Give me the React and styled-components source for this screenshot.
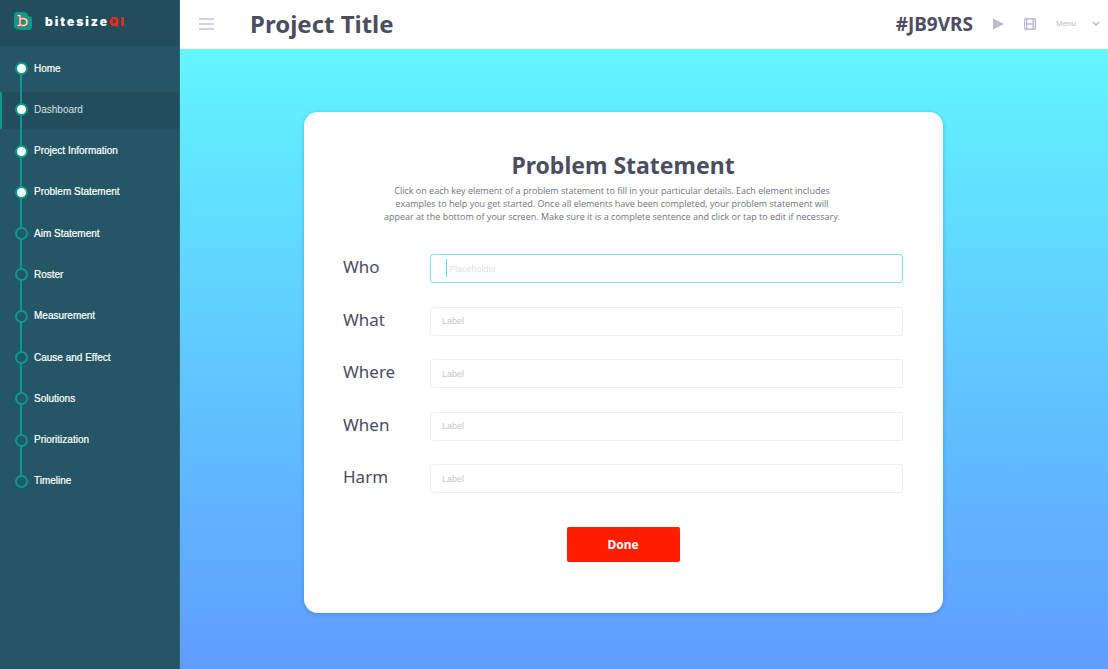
import React from "react";
import styled, { createGlobalStyle } from "styled-components";

const sans = '"Noto Sans", "Open Sans", sans-serif';
const ui = '"Liberation Sans", Arial, sans-serif';
const teal = "#0a9a8c";
const ink = "#4c4d5f";

const GlobalStyle = createGlobalStyle`
  *, *::before, *::after { box-sizing: border-box; }
  body { margin: 0; font-family: ${ui}; color: ${ink}; }
  h1, h2, p, ul { margin: 0; padding: 0; }
  button, input, select { font: inherit; margin: 0; }
`;

const Layout = styled.div`
  display: flex;
  min-height: 100vh;
`;

const Sidebar = styled.aside`
  flex: 0 0 180px;
  background: #245665;
  border-right: 1px solid #2b6172;
`;

const Brand = styled.a`
  display: flex;
  align-items: center;
  gap: 12px;
  height: 46px;
  padding: 0 0 4px 14px;
  background: #214d5c;
  text-decoration: none;
`;

const BrandName = styled.span`
  padding-top: 2px;
  font: 900 12px/20px Inter, sans-serif;
  letter-spacing: 2px;
  color: #fff;
`;

const BrandAccent = styled.span`
  color: #ff2418;
`;

const Steps = styled.ul`
  position: relative;
  display: flex;
  flex-direction: column;
  justify-content: space-between;
  height: 450px;
  margin-top: 5px;
  list-style: none;

  &::before {
    content: "";
    position: absolute;
    z-index: 1;
    top: 18px;
    bottom: 18px;
    left: 20px;
    width: 2px;
    background: ${teal};
  }
`;

const StepLink = styled.a`
  display: flex;
  align-items: center;
  gap: 6px;
  height: 37px;
  padding: 0 0 2px 13px;
  border-left: 2px solid ${(p) => (p.$active ? teal : "transparent")};
  background: ${(p) => (p.$active ? "#214d5c" : "transparent")};
  color: ${(p) => (p.$active ? "#d9e2e5" : "#fff")};
  font-size: 10px;
  line-height: 16px;
  -webkit-text-stroke: ${(p) => (p.$active ? "0" : "thin")};
  text-decoration: none;
`;

const Dot = styled.span`
  position: relative;
  z-index: 2;
  width: 13px;
  height: 13px;
  border: 2px solid ${teal};
  border-radius: 50%;
  background: ${(p) => (p.$done ? "#fff" : "#245665")};
`;

const Page = styled.div`
  flex: 1;
  min-width: 0;
  display: flex;
  flex-direction: column;
`;

const TopBar = styled.header`
  display: flex;
  align-items: center;
  height: 49px;
  padding: 0 8px 2px 19px;
  background: #fff;
  color: #bdbacd;
`;

const ProjectTitle = styled.h1`
  flex: 1;
  margin-left: 36px;
  font: 700 24px/32px ${sans};
  color: ${ink};
`;

const ProjectCode = styled.span`
  margin-right: 20px;
  font: 700 19px/28px ${sans};
  color: ${ink};
`;

const IconButton = styled.button`
  display: flex;
  padding: 0;
  margin-right: ${(p) => p.$gap || 0}px;
  border: 0;
  background: none;
  color: inherit;
  cursor: pointer;
`;

const MenuButton = styled.button`
  display: flex;
  align-items: center;
  gap: 16px;
  padding: 0;
  border: 0;
  background: none;
  color: inherit;
  font-size: 8px;
  line-height: 12px;
  cursor: pointer;
`;

const Main = styled.main`
  flex: 1;
  padding: 63px 165px 56px 124px;
  background: linear-gradient(#62f6ff, #60c8ff 50%, #609dff);
`;

const Card = styled.form`
  display: flex;
  flex-direction: column;
  align-items: center;
  padding: 36px 40px 51px 39px;
  border-radius: 14px;
  background: #fff;
  box-shadow: 0 1px 4px rgba(40, 90, 150, 0.35);
`;

const CardTitle = styled.h2`
  font: 700 23px/34px ${sans};
  color: ${ink};
`;

const Intro = styled.p`
  margin: 2px 22px 0 0;
  font: 400 9px/13px "Open Sans", sans-serif;
  text-align: center;
  color: #73737d;
`;

const Fields = styled.div`
  display: flex;
  flex-direction: column;
  justify-content: space-between;
  align-self: stretch;
  height: 239px;
  margin-top: 31px;
`;

const FieldRow = styled.div`
  display: grid;
  grid-template-columns: 87px 1fr;
  align-items: center;
`;

const FieldLabel = styled.label`
  padding-bottom: 3px;
  font: 400 17px/24px ${sans};
  color: ${ink};
`;

const InputWrap = styled.div`
  position: relative;
  display: flex;
`;

const TextInput = styled.input`
  width: 100%;
  height: 29px;
  padding: 0 ${(p) => (p.$current ? 18 : 11)}px;
  border: 1px solid ${(p) => (p.$current ? "#7be3e9" : "#ededef")};
  border-radius: 3px;
  outline: 0;
  background: #fff;
  font-size: 9px;
  color: ${ink};

  &::placeholder {
    color: ${(p) => (p.$current ? "#dfdfe3" : "#c6c6ca")};
    opacity: 1;
  }
`;

const Caret = styled.span`
  position: absolute;
  top: 5px;
  left: 16px;
  width: 1px;
  height: 18px;
  background: #62dde5;
`;

const DoneButton = styled.button`
  width: 113px;
  height: 35px;
  margin-top: 34px;
  padding: 0;
  border: 0;
  border-radius: 2px;
  background: #ff1e00;
  color: #fff;
  font: 700 12px/18px ${sans};
  cursor: pointer;
`;

const Logo = () => (
  <svg width="19" height="20" viewBox="0 0 19 20" aria-hidden="true">
    <path d="M3 1h7c2 0 4 1 4 4 3 0 4 1 4 3v7c0 2-1 4-3 4H6c-1 0-2-1-3-1-2 0-3-1-3-3V4c0-2 1-3 3-3z" fill={teal} />
    <g fill="none">
      <path d="M3.5 4.5H6v10M3.5 14.5H6M6 9c2-2.500 7-2 7 2s-5 4.500-7 2" stroke="#ef533b" strokeWidth="2.400" />
      <path d="M3.500 4.500H6v10M3.500 14.500H6M6 9c2-2.500 7-2 7 2s-5 4.500-7 2" stroke="#f7e4de" strokeWidth="1.200" />
    </g>
  </svg>
);

const steps = [
  { name: "Home", done: true },
  { name: "Dashboard", done: true, active: true },
  { name: "Project Information", done: true },
  { name: "Problem Statement", done: true },
  { name: "Aim Statement" },
  { name: "Roster" },
  { name: "Measurement" },
  { name: "Cause and Effect" },
  { name: "Solutions" },
  { name: "Prioritization" },
  { name: "Timeline" },
];

const fields = [
  { name: "Who", placeholder: "Placeholder", current: true },
  { name: "What", placeholder: "Label" },
  { name: "Where", placeholder: "Label" },
  { name: "When", placeholder: "Label" },
  { name: "Harm", placeholder: "Label" },
];

export default function App() {
  return (
    <Layout>
      <GlobalStyle />
      <Sidebar>
        <Brand href="#">
          <Logo />
          <BrandName>
            bitesize<BrandAccent>QI</BrandAccent>
          </BrandName>
        </Brand>
        <nav aria-label="Project steps">
          <Steps>
            {steps.map((s) => (
              <li key={s.name}>
                <StepLink href="#" $active={s.active}>
                  <Dot $done={s.done} />
                  {s.name}
                </StepLink>
              </li>
            ))}
          </Steps>
        </nav>
      </Sidebar>
      <Page>
        <TopBar>
          <IconButton type="button" aria-label="Toggle navigation">
            <svg width="15" height="14" viewBox="0 0 15 14" fill="none" stroke="#d3d1df" strokeWidth="2">
              <path d="M0 2h15M0 7h15M0 12h15" />
            </svg>
          </IconButton>
          <ProjectTitle>Project Title</ProjectTitle>
          <ProjectCode>#JB9VRS</ProjectCode>
          <IconButton type="button" aria-label="Play" $gap={20}>
            <svg width="11" height="12" viewBox="0 0 11 12" fill="currentColor">
              <path d="M0 0.500l11 5.500L0 11.500z" />
            </svg>
          </IconButton>
          <IconButton type="button" aria-label="Video" $gap={20}>
            <svg width="12" height="12" viewBox="0 0 12 12" fill="none" stroke="currentColor">
              <rect x="0.700" y="0.700" width="10.600" height="10.600" rx="1" strokeWidth="1.400" />
              <path d="M2.700 1v10M9.300 1v10M3 6h6" strokeWidth="1.400" />
              <path d="M1.500 3v1M1.500 5.500v1M1.500 8v1M10.500 3v1M10.500 5.500v1M10.500 8v1" stroke="#fff" strokeWidth="0.800" />
            </svg>
          </IconButton>
          <MenuButton type="button">
            Menu
            <svg width="8" height="6" viewBox="0 0 8 6" fill="none" stroke="currentColor" strokeWidth="1.3">
              <path d="M1 1l3 3 3-3" />
            </svg>
          </MenuButton>
        </TopBar>
        <Main>
          <Card onSubmit={(e) => e.preventDefault()}>
            <CardTitle>Problem Statement</CardTitle>
            <Intro>
              Click on each key element of a problem statement to fill in your particular details. Each element includes
              <br />
              examples to help you get started. Once all elements have been completed, your problem statement will
              <br />
              appear at the bottom of your screen. Make sure it is a complete sentence and click or tap to edit if
              necessary.
            </Intro>
            <Fields>
              {fields.map((f) => (
                <FieldRow key={f.name}>
                  <FieldLabel htmlFor={f.name}>{f.name}</FieldLabel>
                  <InputWrap>
                    <TextInput id={f.name} type="text" placeholder={f.placeholder} $current={f.current} />
                    {f.current && <Caret />}
                  </InputWrap>
                </FieldRow>
              ))}
            </Fields>
            <DoneButton type="submit">Done</DoneButton>
          </Card>
        </Main>
      </Page>
    </Layout>
  );
}
